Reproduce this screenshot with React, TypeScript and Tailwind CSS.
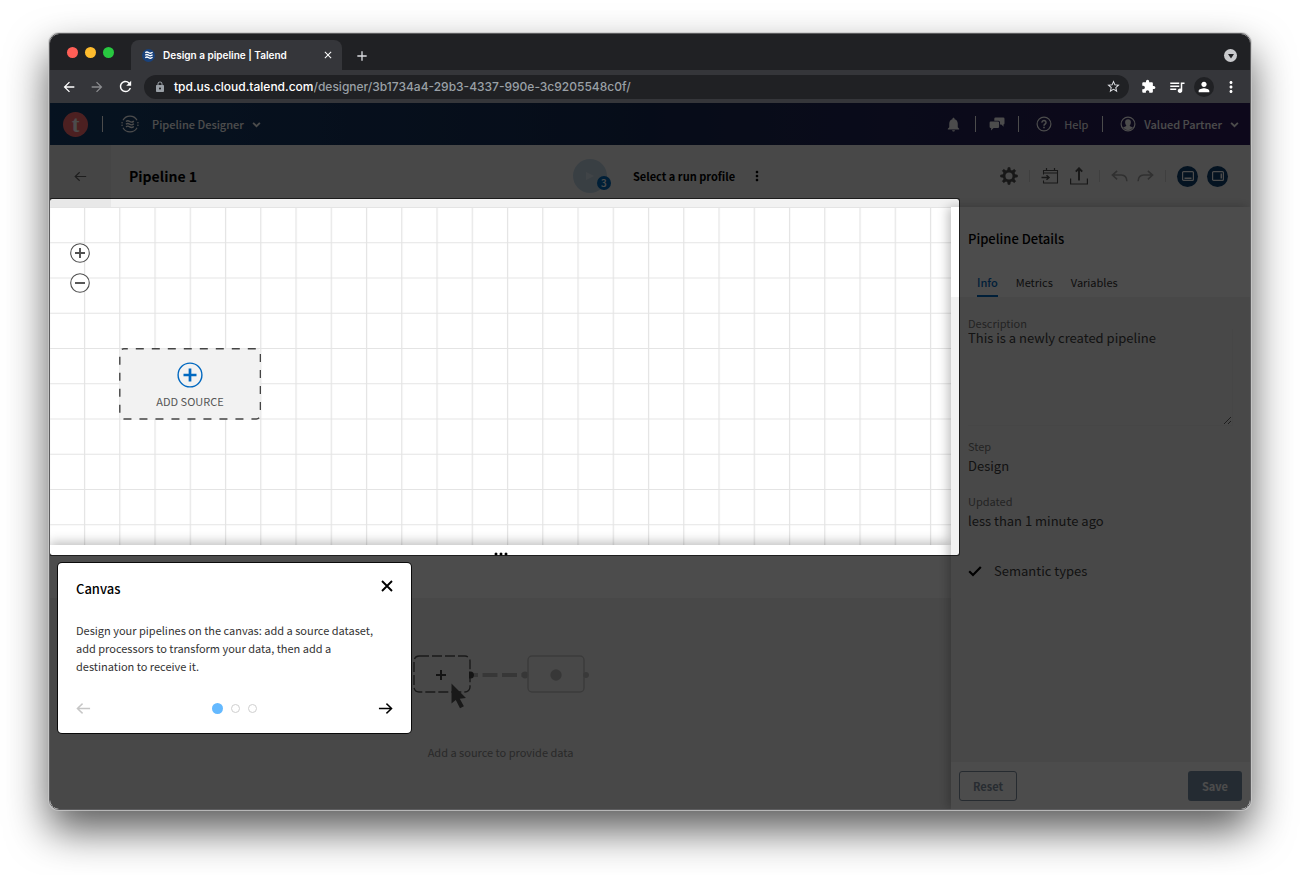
import React from "react";
import {
  MdArrowBack,
  MdArrowForward,
  MdRefresh,
  MdLock,
  MdStarBorder,
  MdExtension,
  MdQueueMusic,
  MdPerson,
  MdMoreVert,
  MdClose,
  MdAdd,
  MdNotifications,
} from "react-icons/md";

type IconProps = { className?: string };

const WavePaths = () => (
  <g fill="none" stroke="currentColor" strokeWidth="1.5">
    <path d="M5.5 7.2q2-1.6 4.2 0t4.6-.4" />
    <path d="M5.5 10.2q2-1.6 4.2 0t4.6-.4" />
    <path d="M5.5 13.2q2-1.6 4.2 0t4.6-.4" />
  </g>
);

const PipelineIcon = ({ className }: IconProps) => (
  <svg viewBox="0 0 20 20" className={className} aria-hidden="true">
    <path d="M2.2 5.800A8.900 8.900 0 0 1 17.800 5.800M2.200 14.200A8.900 8.900 0 0 0 17.800 14.200" fill="none" stroke="currentColor" strokeWidth="1.300" />
    <g fill="currentColor">
      <circle cx="1.200" cy="8.600" r="0.900" />
      <circle cx="1.200" cy="11.400" r="0.900" />
      <circle cx="18.800" cy="8.600" r="0.900" />
      <circle cx="18.800" cy="11.400" r="0.900" />
    </g>
    <WavePaths />
  </svg>
);

const Chevron = ({ className }: IconProps) => (
  <svg viewBox="0 0 8 8" className={className} aria-hidden="true">
    <path d="M1 2.5 4 5.5 7 2.5" fill="none" stroke="currentColor" strokeWidth="1.6" />
  </svg>
);

const ChatIcon = ({ className }: IconProps) => (
  <svg viewBox="0 0 16 16" className={className} aria-hidden="true" fill="currentColor">
    <path d="M6.6 1.5h7.6a1.3 1.3 0 0 1 1.3 1.3v4.4a1.3 1.3 0 0 1-1.1 1.3l.3 2.2-2.4-2.2H11V6.300a1.500 1.500 0 0 0-1.500-1.500H5.300v-2a1.300 1.300 0 0 1 1.300-1.300z" />
    <path d="M1.800 5.600h7.100a1.200 1.200 0 0 1 1.200 1.200v4a1.200 1.200 0 0 1-1.200 1.200H4.600L2 14.500l.2-2.500h-.4A1.200 1.200 0 0 1 .6 10.800v-4a1.200 1.200 0 0 1 1.200-1.200z" />
  </svg>
);

const HelpIcon = ({ className }: IconProps) => (
  <svg viewBox="0 0 16 16" className={className} aria-hidden="true" fill="none" stroke="currentColor">
    <circle cx="8" cy="8" r="6.900" strokeWidth="1.2" />
    <path d="M6 6.600a2 1.900 0 1 1 3.200 1.400C8.400 8.500 8 8.800 8 9.700" strokeWidth="1.500" />
    <path d="M8 10.700v1.500" strokeWidth="1.600" />
  </svg>
);

const UserIcon = ({ className }: IconProps) => (
  <svg viewBox="0 0 16 16" className={className} aria-hidden="true">
    <circle cx="8" cy="8" r="6.900" fill="none" stroke="currentColor" strokeWidth="1.200" />
    <path d="M8 3.200c1.900 0 2.900 1.300 2.900 3S9.900 9.300 9.600 9.700c.5.900 2.300.9 3.300 1.900A6.200 6.200 0 0 1 8 14.200a6.200 6.200 0 0 1-4.900-2.600c1-1 2.800-1 3.300-1.900-.3-.4-1.300-1.800-1.300-3.500s1-3 2.900-3z" fill="currentColor" />
  </svg>
);

const GearIcon = ({ className }: IconProps) => (
  <svg viewBox="0 0 18 18" className={className} aria-hidden="true">
    <circle cx="9" cy="9" r="4.900" fill="none" stroke="currentColor" strokeWidth="2.700" />
    {[0, 45, 90, 135, 180, 225, 270, 315].map((a) => (
      <path key={a} d="M7.400 3.600 8 .5h2l.6 3.100z" fill="currentColor" stroke="currentColor" strokeWidth=".5" transform={`rotate(${a} 9 9)`} />
    ))}
  </svg>
);

const CalendarIcon = ({ className }: IconProps) => (
  <svg viewBox="0 0 18 18" className={className} aria-hidden="true" fill="none" stroke="currentColor">
    <path d="M2.500 7.500V3.500h14v12.500h-14v-2.500" strokeWidth="1.100" />
    <path d="M2.500 6h14" strokeWidth="1.100" />
    <path d="M5.500 1v3M13.500 1v3" strokeWidth="1.200" />
    <path d="M.5 10.500h7M5.500 8.200l2.500 2.300-2.500 2.300" strokeWidth="1.500" />
  </svg>
);

const ExportIcon = ({ className }: IconProps) => (
  <svg viewBox="0 0 18 18" className={className} aria-hidden="true" fill="none" stroke="currentColor">
    <path d="M.6 11.500v5.500h16.800v-5.500" strokeWidth="1.200" />
    <path d="M9 13.500V1.500M5.800 4.700 9 1.300l3.200 3.400" strokeWidth="1.900" />
  </svg>
);

const UndoIcon = ({ className }: IconProps) => (
  <svg viewBox="0 0 18 14" className={className} aria-hidden="true" fill="none" stroke="currentColor" strokeWidth="1.700">
    <path d="M6.500 1.500 1.500 6l5 4.500M1.500 6H11q5.500.2 5.800 6.500" />
  </svg>
);

const ArrowIcon = ({ className }: IconProps) => (
  <svg viewBox="0 0 16 14" className={className} aria-hidden="true" fill="none" stroke="currentColor" strokeWidth="1.500">
    <path d="M7 1.800 1.500 7 7 12.200M1.500 7H15" />
  </svg>
);

const Separator = () => <span className="h-4 w-px shrink-0 bg-white" aria-hidden="true" />;
const ToolSeparator = () => <span className="h-3 w-px shrink-0 bg-[#d2d2d2]" aria-hidden="true" />;

function BrowserChrome() {
  return (
    <header className="shrink-0 font-['Inter',sans-serif]">
      <div className="flex h-9 items-end bg-[#202124]">
        <div className="flex gap-[7px] self-center pl-[17px]" aria-hidden="true">
          <span className="size-[11px] rounded-full bg-[#ff5f57]" />
          <span className="size-[11px] rounded-full bg-[#febc2e]" />
          <span className="size-[11px] rounded-full bg-[#28c840]" />
        </div>
        <div className="ml-[17px] flex h-[30px] w-[211px] items-center rounded-t-lg bg-[#35363a] pr-2 pl-[11px] text-white">
          <span className="flex size-[13px] items-center justify-center rounded-full bg-[#19427c]">
            <svg viewBox="4 4 12 12" className="size-[10px]" aria-hidden="true"><WavePaths /></svg>
          </span>
          <span className="ml-2 flex-1 text-[10px] leading-4 font-semibold whitespace-nowrap">Design a pipeline | Talend</span>
          <button aria-label="Close tab"><MdClose className="size-3" /></button>
        </div>
        <button aria-label="New tab" className="mb-[6px] ml-3 text-[#dadce0]"><MdAdd className="size-4" /></button>
        <button aria-label="Search tabs" className="mr-[13px] mb-2 ml-auto flex size-[13px] items-center justify-center rounded-full bg-[#c9cacd]">
          <svg viewBox="0 0 8 8" className="size-2" aria-hidden="true"><path d="M1 2h6L4 6.500z" fill="#202124" /></svg>
        </button>
      </div>
      <div className="flex h-[33px] items-center bg-[#35363a] pr-[10px] pl-[11px] text-white">
        <button aria-label="Back"><MdArrowBack className="size-4" /></button>
        <button aria-label="Forward" className="ml-3 text-[#8b8c8f]"><MdArrowForward className="size-4" /></button>
        <button aria-label="Reload" className="ml-3"><MdRefresh className="size-[17px]" /></button>
        <label className="ml-[10px] flex h-6 flex-1 items-center rounded-full bg-[#202124] pr-2 pl-[10px] text-[12px] font-medium">
          <MdLock className="mr-2 size-3 shrink-0 text-[#9aa0a6]" />
          <span>tpd.us.cloud.talend.com</span>
          <input aria-label="Address" className="min-w-0 flex-1 bg-transparent text-[#9aa0a6] outline-none" defaultValue="/designer/3b1734a4-29b3-4337-990e-3c9205548c0f/" />
          <MdStarBorder className="size-[15px] shrink-0 text-[#dfe1e5]" />
        </label>
        <div className="ml-3 flex items-center gap-3">
          <button aria-label="Extensions"><MdExtension className="size-[15px]" /></button>
          <button aria-label="Media"><MdQueueMusic className="size-[18px]" /></button>
          <button aria-label="Profile" className="-ml-1 flex size-5 items-center justify-center rounded-full bg-[#202124]"><MdPerson className="size-4" /></button>
          <button aria-label="Menu" className="-ml-1"><MdMoreVert className="size-[18px]" /></button>
        </div>
      </div>
    </header>
  );
}

function AppHeader() {
  return (
    <header className="flex h-[42px] shrink-0 items-center bg-linear-to-r from-[#173f6b] via-[#172b55] to-[#2e1b5b] pr-[11px] pl-[13px] text-[11px] leading-4 font-medium text-white">
      <a href="#home" aria-label="Talend" className="flex size-[25px] items-center justify-center rounded-full bg-[#ff6d70] font-['Liberation_Serif',serif] text-[23px] leading-none font-bold">t</a>
      <div className="ml-[14px] flex items-center"><Separator /></div>
      <button className="ml-[18px] flex items-center">
        <PipelineIcon className="size-[18px]" />
        <span className="ml-[13px]">Pipeline Designer</span>
        <Chevron className="ml-2 size-[9px]" />
      </button>
      <div className="ml-auto flex items-center">
        <button aria-label="Notifications"><MdNotifications className="size-[17px]" /></button>
        <div className="ml-[13px] flex items-center"><Separator /></div>
        <button aria-label="Chat" className="ml-[13px]"><ChatIcon className="size-4" /></button>
        <div className="ml-[13px] flex items-center"><Separator /></div>
        <button className="ml-[17px] flex items-center font-normal">
          <HelpIcon className="size-4" />
          <span className="ml-3">Help</span>
        </button>
        <div className="ml-[14px] flex items-center"><Separator /></div>
        <button className="ml-[17px] flex items-center">
          <UserIcon className="size-4" />
          <span className="ml-2">Valued Partner</span>
          <Chevron className="ml-2 size-[9px]" />
        </button>
      </div>
    </header>
  );
}

function PipelineToolbar() {
  return (
    <div className="flex h-[62px] shrink-0 items-center bg-[#f2f2f2] text-[#505050]">
      <div className="flex flex-1 items-center self-stretch">
        <button aria-label="Back to pipelines" className="flex w-[61px] items-center justify-center self-stretch bg-[#e8e8e8] text-[#666]">
          <ArrowIcon className="size-[13px]" />
        </button>
        <h1 className="ml-[18px] text-[14px] leading-5 font-bold text-black">Pipeline 1</h1>
      </div>
      <div className="flex items-center pl-[60px]">
        <button aria-label="Run pipeline" className="relative flex size-[34px] items-center justify-center rounded-full bg-[#bfd3e2]">
          <svg viewBox="0 0 8 8" className="size-2" aria-hidden="true"><path d="M0 0 8 4 0 8z" fill="#d8e4ee" /></svg>
          <span className="absolute -right-1 bottom-[3px] flex size-[14px] items-center justify-center rounded-full bg-[#0068b8] text-[10px] leading-none font-medium text-white">3</span>
        </button>
        <button className="ml-[26px] text-[11px] leading-4 font-bold text-black">Select a run profile</button>
        <button aria-label="Run options" className="ml-[14px] text-black"><MdMoreVert className="size-4" /></button>
      </div>
      <div className="flex flex-1 items-center justify-end gap-[11px] pr-[22px]">
        <button aria-label="Settings"><GearIcon className="size-[18px]" /></button>
        <ToolSeparator />
        <button aria-label="Schedule"><CalendarIcon className="size-[18px]" /></button>
        <button aria-label="Export"><ExportIcon className="size-[18px]" /></button>
        <ToolSeparator />
        <div className="flex items-center gap-[9px] text-[#a0a0a0]">
          <button aria-label="Undo"><UndoIcon className="h-[14px] w-[17px]" /></button>
          <button aria-label="Redo"><UndoIcon className="h-[14px] w-[17px] -scale-x-100" /></button>
        </div>
        <ToolSeparator />
        <div className="flex items-center gap-[9px] text-white">
          <button aria-label="Toggle preview" className="flex size-[21px] items-center justify-center rounded-full bg-[#10406e]">
            <svg viewBox="0 0 12 12" className="size-3" aria-hidden="true"><rect x=".6" y="1.600" width="10.800" height="8.800" rx="1" fill="none" stroke="currentColor" strokeWidth="1.200" /><path d="M2.500 8.300h7" stroke="currentColor" strokeWidth="1.500" /></svg>
          </button>
          <button aria-label="Toggle details" className="flex size-[21px] items-center justify-center rounded-full bg-[#10406e]">
            <svg viewBox="0 0 12 12" className="size-3" aria-hidden="true"><rect x=".6" y="1.600" width="10.800" height="8.800" rx="1" fill="none" stroke="currentColor" strokeWidth="1.200" /><path d="M9.300 3.500v5" stroke="currentColor" strokeWidth="1.500" /></svg>
          </button>
        </div>
      </div>
    </div>
  );
}

function TourDialog() {
  return (
    <div role="dialog" aria-labelledby="tour-title" className="absolute top-full left-2 z-30 mt-[18px] w-[353px] rounded-[4px] bg-white px-[18px] pt-[15px] pb-[17px] shadow-[0_0_0_1px_rgba(0,0,0,0.85)]">
      <div className="flex items-start justify-between">
        <h2 id="tour-title" className="pt-[2px] text-[13px] leading-[18px] font-medium text-black">Canvas</h2>
        <button aria-label="Close" className="pt-[2px] text-black">
          <svg viewBox="0 0 12 12" className="size-3" aria-hidden="true"><path d="M1 1 11 11M11 1 1 11" stroke="currentColor" strokeWidth="1.900" /></svg>
        </button>
      </div>
      <p className="mt-[23px] pr-[14px] text-[11px] leading-[18px] text-[#333]">
        Design your pipelines on the canvas: add a source dataset, add processors to transform your data, then add a destination to receive it.
      </p>
      <div className="mt-[26px] flex items-center justify-between">
        <button aria-label="Previous" className="text-[#c6c6c6]"><ArrowIcon className="size-[15px]" /></button>
        <div className="flex items-center gap-2">
          <span className="size-[11px] rounded-full bg-[#64b9ff]" />
          <span className="size-[9px] rounded-full border border-[#cfcfcf]" />
          <span className="size-[9px] rounded-full border border-[#cfcfcf]" />
        </div>
        <button aria-label="Next" className="text-black"><ArrowIcon className="size-[15px] -scale-x-100" /></button>
      </div>
    </div>
  );
}

function Canvas() {
  return (
    <section aria-label="Canvas" className="relative flex-[338_1_0%] bg-white">
      <svg className="absolute inset-0 h-full w-full" aria-hidden="true">
        <defs>
          <pattern id="grid" x="-1.300" y="0" width="35.250" height="35.250" patternUnits="userSpaceOnUse">
            <path d="M0 .5H36M.6 0V36" fill="none" stroke="#e4e4e4" strokeWidth="1.200" />
          </pattern>
        </defs>
        <rect width="100%" height="100%" fill="url(#grid)" />
      </svg>
      <div className="absolute top-9 left-5 flex flex-col gap-[10px] text-[#505050]">
        <button aria-label="Zoom in" className="rounded-full bg-white">
          <svg viewBox="0 0 20 20" className="size-5" aria-hidden="true"><circle cx="10" cy="10" r="9.300" fill="none" stroke="currentColor" strokeWidth="1.100" /><path d="M5 10h10M10 5v10" stroke="currentColor" strokeWidth="1.900" /></svg>
        </button>
        <button aria-label="Zoom out" className="rounded-full bg-white">
          <svg viewBox="0 0 20 20" className="size-5" aria-hidden="true"><circle cx="10" cy="10" r="9.300" fill="none" stroke="currentColor" strokeWidth="1.100" /><path d="M5 10h10" stroke="currentColor" strokeWidth="1.900" /></svg>
        </button>
      </div>
      <button className="absolute top-[141px] left-[69px] flex h-[72px] w-[142px] flex-col items-center pt-[14px]">
        <svg className="absolute inset-0 size-full" aria-hidden="true">
          <rect x="0.800" y="0.800" width="140.600" height="70.200" rx="4" fill="#f2f2f2" stroke="#444" strokeWidth="1.400" strokeDasharray="8 8" strokeDashoffset="4" />
        </svg>
        <svg viewBox="0 0 26 26" className="relative size-[26px] text-[#0068c0]" aria-hidden="true"><circle cx="13" cy="13" r="11.900" fill="none" stroke="currentColor" strokeWidth="1.400" /><path d="M6.500 13h13M13 6.500v13" stroke="currentColor" strokeWidth="2.700" /></svg>
        <span className="relative mt-[5px] text-[11px] leading-4 text-[#555]">ADD SOURCE</span>
      </button>
      <div aria-hidden="true" className="pointer-events-none absolute top-[-8px] right-[-8px] bottom-[-10px] left-0 z-20 rounded-[2px] shadow-[0_0_0_1px_rgba(0,0,0,0.6),0_0_0_2000px_rgba(0,0,0,0.7)]" />
      <TourDialog />
    </section>
  );
}

function Preview() {
  return (
    <section aria-label="Preview" className="relative flex flex-[264_1_0%] flex-col bg-white shadow-[0_-3px_10px_rgba(0,0,0,0.25)]">
      <div className="flex h-[53px] items-start justify-center pt-[7px]">
        <svg viewBox="0 0 16 4" className="h-1 w-4" fill="#000" aria-hidden="true"><circle cx="3" cy="2" r="1.500" /><circle cx="8" cy="2" r="1.500" /><circle cx="13" cy="2" r="1.500" /></svg>
      </div>
      <div className="flex flex-1 flex-col items-center bg-[#f2f2f2] pt-[57px]">
        <svg viewBox="0 0 176 56" className="h-14 w-44" aria-hidden="true">
          <rect x="1" y="1" width="56" height="36" rx="5" fill="none" stroke="#555" strokeWidth="1.400" strokeDasharray="10 3" />
          <path d="M23 20h10M28 15v10" stroke="#444" strokeWidth="2" />
          <path d="M56 16.500h1.500a3.500 3.500 0 0 1 0 7H56z" fill="#444" />
          <path d="M61 20h52" stroke="#bababa" strokeWidth="4" strokeDasharray="15 4.500" strokeDashoffset="11" />
          <circle cx="112" cy="20" r="3.400" fill="#bababa" />
          <rect x="115" y="1" width="56" height="36" rx="4" fill="none" stroke="#c4c4c4" strokeWidth="1.400" />
          <circle cx="143" cy="20" r="5.700" fill="#bababa" />
          <circle cx="173" cy="20" r="3" fill="#c0c0c0" />
          <path d="M38.500 28.500v20l4.300-3.500 4.200 8.300 3.900-2-4.100-7.500 6.200-.8z" fill="#555" />
        </svg>
        <p className="mt-[33px] text-[11px] leading-4 text-[#8a8a8a]">Add a source to provide data</p>
      </div>
    </section>
  );
}

const TABS = ["Info", "Metrics", "Variables"];

function DetailsPanel() {
  return (
    <aside className="relative z-10 flex w-[299px] shrink-0 flex-col bg-[#f2f2f2] shadow-[-3px_0_10px_rgba(0,0,0,0.25)]">
      <div className="h-[90px] bg-white pl-[17px]">
        <h2 className="pt-[22px] text-[13px] leading-5 font-medium text-black">Pipeline Details</h2>
        <div role="tablist" className="mt-[21px] ml-[9px] flex gap-[18px] text-[11px] leading-4">
          {TABS.map((tab, i) => (
            <button
              key={tab}
              role="tab"
              aria-selected={i === 0}
              className={i === 0 ? "border-b-2 border-[#0068c0] pt-1 pb-[5px] font-medium text-[#0068c0]" : "border-b-2 border-transparent pt-1 pb-[5px] text-[#333]"}
            >
              {tab}
            </button>
          ))}
        </div>
      </div>
      <div className="flex-1 pt-5 pr-[17px] pl-[17px] text-[13px] leading-[18px] text-[#404040]">
        <label htmlFor="description" className="block text-[11px] leading-3 text-[#777]">Description</label>
        <textarea id="description" defaultValue="This is a newly created pipeline" className="block h-[97px] w-full border-r border-b border-[#ececec] bg-transparent outline-none" />
        <dl className="mt-[12px]">
          <dt className="text-[11px] leading-4 text-[#777]">Step</dt>
          <dd className="mt-[3px]">Design</dd>
          <dt className="mt-[18px] text-[11px] leading-4 text-[#777]">Updated</dt>
          <dd className="mt-[3px]">less than 1 minute ago</dd>
        </dl>
        <label className="relative mt-8 flex items-center">
          <input type="checkbox" defaultChecked className="peer size-[14px] appearance-none" />
          <svg viewBox="0 0 14 12" className="absolute left-0 h-3 w-[14px]" aria-hidden="true"><path d="M1.200 6.200 5 10l7.800-8" fill="none" stroke="#000" strokeWidth="2.200" /></svg>
          <span className="ml-3">Semantic types</span>
        </label>
      </div>
      <div className="flex h-[47px] items-center justify-between bg-white px-2 text-[11px] leading-4 font-bold">
        <button className="h-[30px] rounded-[3px] border border-[#8090a0] px-[13px] text-[#8595a5]">Reset</button>
        <button className="h-[30px] rounded-[3px] bg-[#7a91a8] px-[14px] text-white">Save</button>
      </div>
    </aside>
  );
}

export default function App() {
  return (
    <div className="flex h-screen min-h-[700px] flex-col bg-white px-[49px] pt-[33px] pb-[65px] font-['Noto_Sans_CJK_SC',sans-serif]">
      <div className="flex flex-1 flex-col overflow-hidden rounded-[10px] border border-[#5c5c5e] shadow-[0_0_0_1px_rgba(200,200,200,0.8),0_20px_42px_rgba(0,0,0,0.65)]">
        <BrowserChrome />
        <div className="relative flex min-h-0 flex-1 flex-col overflow-hidden">
          <AppHeader />
          <PipelineToolbar />
          <main className="flex min-h-0 flex-1">
            <div className="flex min-w-0 flex-1 flex-col">
              <Canvas />
              <Preview />
            </div>
            <DetailsPanel />
          </main>
        </div>
      </div>
    </div>
  );
}
